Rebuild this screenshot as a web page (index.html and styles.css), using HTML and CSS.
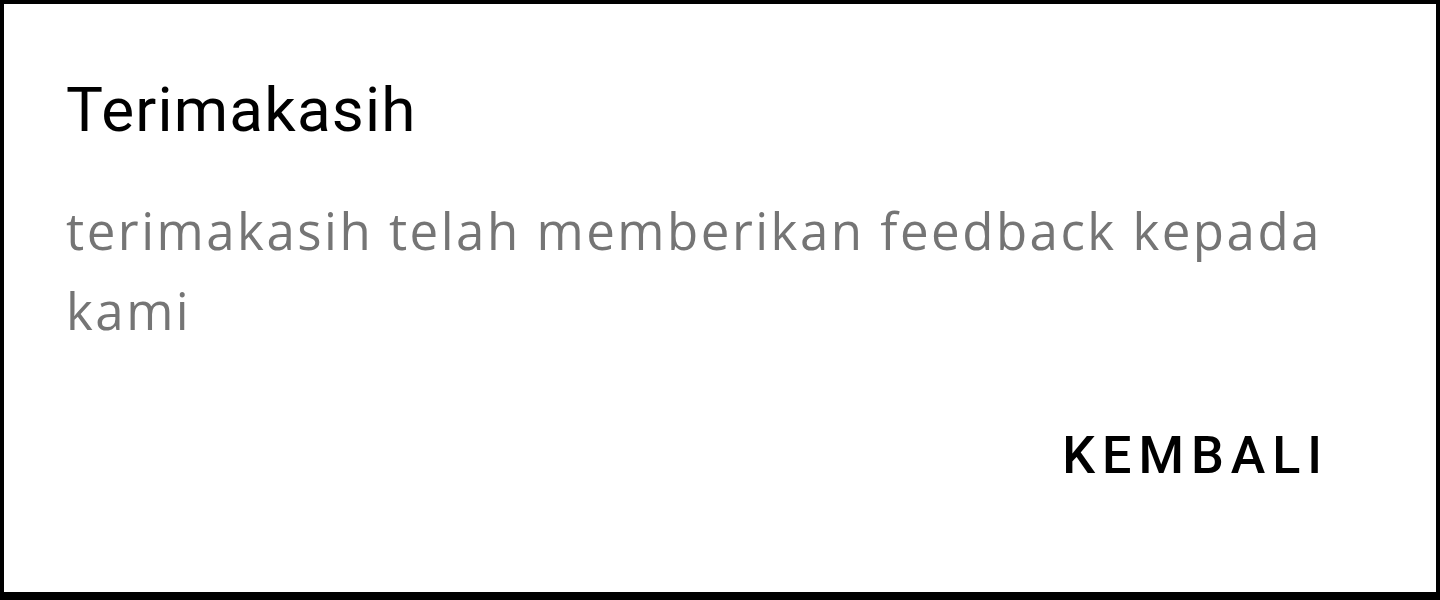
FILE: index.html
```html
<!DOCTYPE html>
<html lang="id">
<head>
<meta charset="utf-8">
<title>Terimakasih</title>
<link rel="stylesheet" href="styles.css">
</head>
<body>
<div class="dialog">
  <h1 class="title">Terimakasih</h1>
  <p class="message">terimakasih telah memberikan feedback kepada kami</p>
  <div class="actions">
    <button class="btn">KEMBALI</button>
  </div>
</div>
</body>
</html>
```
FILE: styles.css
```css
html, body {
  margin: 0;
  padding: 0;
  background: #000;
  height: 600px;
  overflow: hidden;
}
.dialog {
  margin: 4px 4px 0 4px;
  height: 588px;
  box-sizing: border-box;
  background: #fff;
  padding: 70px 62px 0 62px;
  display: flex;
  flex-direction: column;
}
.title {
  margin: 0;
  font-family: Roboto, "Liberation Sans", sans-serif;
  font-weight: 400;
  font-size: 62px;
  line-height: 72px;
  letter-spacing: 1.2px;
  color: #000;
}
.message {
  margin: 44px 0 0 0;
  font-family: "Open Sans", "Noto Sans", sans-serif;
  font-size: 51px;
  line-height: 80px;
  letter-spacing: 2.5px;
  color: #757575;
}
.actions {
  display: flex;
  justify-content: flex-end;
  margin-top: 76px;
}
.btn {
  border: 0;
  background: transparent;
  padding: 0;
  margin-right: 45px;
  font-family: Roboto, "Liberation Sans", sans-serif;
  font-weight: 500;
  font-size: 52px;
  line-height: 60px;
  letter-spacing: 7px;
  color: #000;
}
```
